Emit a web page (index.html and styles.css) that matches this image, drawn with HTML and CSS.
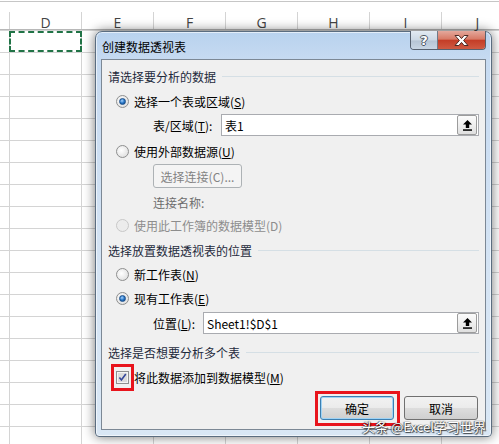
FILE: index.html
```html
<!DOCTYPE html>
<html>
<head>
    <meta charset="utf-8">
    <title>创建数据透视表</title>
    <link rel="stylesheet" href="styles.css">
</head>
<body>
    <div class="sheet">
        <div class="topbar"></div>
        <div class="colHeads">
            <div class="colHead first"></div>
            <div class="colHead">D</div>
            <div class="colHead">E</div>
            <div class="colHead">F</div>
            <div class="colHead">G</div>
            <div class="colHead">H</div>
            <div class="colHead">I</div>
            <div class="colHead">J</div>
        </div>
        <div class="grid">
            <div class="activeCell"></div>
        </div>
    </div>

    <div class="dialog">
        <div class="titleBar">
            <span class="title">创建数据透视表</span>
            <div class="capButtons">
                <div class="capBtn help">?</div>
                <div class="capBtn close">
                    <svg width="17" height="13" viewBox="0 0 17 13">
                        <path d="M2 1.5h3.9L8.5 4.6l2.6-3.1H15L10.6 6.5l4.4 5H11.1L8.5 8.4l-2.6 3.1H2l4.4-5z" fill="#fff" stroke="#4b2a24" stroke-width="1"/>
                    </svg>
                </div>
            </div>
        </div>

        <div class="client">
            <div class="group">
                <span>请选择要分析的数据</span>
                <div class="rule"></div>
            </div>
            <div class="opt gap5">
                <span class="radio on"></span>
                <span>选择一个表或区域(<u>S</u>)</span>
            </div>
            <div class="field gap3">
                <span class="fieldLabel wide">表/区域(<u>T</u>):</span>
                <div class="inputBox">
                    <span class="inputText">表1</span>
                    <div class="pickBtn">
                        <svg width="9" height="11" viewBox="0 0 9 11">
                            <path d="M4.5 0L9 4.6H6.2V8H2.8V4.6H0z" fill="#000"/>
                            <rect x="0" y="9.3" width="9" height="1.5" fill="#000"/>
                        </svg>
                    </div>
                </div>
            </div>
            <div class="opt gap5">
                <span class="radio"></span>
                <span>使用外部数据源(<u>U</u>)</span>
            </div>
            <div class="sub gap3">
                <div class="btn disabled">选择连接(C)...</div>
            </div>
            <div class="sub subText gap4">连接名称:</div>
            <div class="opt dim gap3">
                <span class="radio off"></span>
                <span>使用此工作簿的数据模型(D)</span>
            </div>

            <div class="group gap5">
                <span>选择放置数据透视表的位置</span>
                <div class="rule"></div>
            </div>
            <div class="opt gap4">
                <span class="radio"></span>
                <span>新工作表(<u>N</u>)</span>
            </div>
            <div class="opt gap4">
                <span class="radio on"></span>
                <span>现有工作表(<u>E</u>)</span>
            </div>
            <div class="field gap4">
                <span class="fieldLabel">位置(<u>L</u>):</span>
                <div class="inputBox">
                    <span class="inputText">Sheet1!$D$1</span>
                    <div class="pickBtn">
                        <svg width="9" height="11" viewBox="0 0 9 11">
                            <path d="M4.5 0L9 4.6H6.2V8H2.8V4.6H0z" fill="#000"/>
                            <rect x="0" y="9.3" width="9" height="1.5" fill="#000"/>
                        </svg>
                    </div>
                </div>
            </div>

            <div class="group gap8">
                <span>选择是否想要分析多个表</span>
                <div class="rule"></div>
            </div>
            <div class="opt gap5">
                <span class="checkbox marked">
                    <svg width="13" height="13" viewBox="0 0 13 13">
                        <rect x="0.5" y="0.5" width="12" height="12" fill="#f4f4f4" stroke="#8e8f8f"/>
                        <rect x="2" y="2" width="9" height="9" fill="#dcdcdc"/>
                        <path d="M3.4 6.6l2 2.4 4.4-6" fill="none" stroke="#34479a" stroke-width="1.6"/>
                    </svg>
                </span>
                <span>将此数据添加到数据模型(<u>M</u>)</span>
            </div>

            <div class="actions">
                <div class="btn default marked">确定</div>
                <div class="btn">取消</div>
            </div>
        </div>
    </div>

    <div class="watermark">头条 @Excel学习世界</div>
</body>
</html>
```

FILE: styles.css
```css
body {
    margin: 0;
    width: 499px;
    height: 444px;
    overflow: hidden;
    background: #fff;
    position: relative;
    font-family: "Noto Sans CJK SC", sans-serif;
}

/* spreadsheet behind the dialog */
.topbar {
    margin-top: 1px;
    height: 10px;
    border-top: 1px solid #c6c6c6;
}

.colHeads {
    display: flex;
    height: 17px;
    border-bottom: 1px solid #b8b8b8;
}

.colHead {
    flex: 0 0 72px;
    box-sizing: border-box;
    border-right: 1px solid #d4d4d4;
    text-align: center;
    font-family: "Open Sans", sans-serif;
    font-size: 14px;
    line-height: 21px;
    color: #444;
}

.colHead.first {
    flex-basis: 10px;
}

.grid {
    height: 420px;
    background-image:
        linear-gradient(to right, #d4d4d4 1px, transparent 1px),
        linear-gradient(to bottom, #d4d4d4 1px, transparent 1px);
    background-size: 72px 100%, 100% 22px;
    background-position: 9px 0, 0 0;
    padding-top: 1px;
}

.activeCell {
    margin-left: 9px;
    width: 73px;
    height: 21px;
    box-sizing: border-box;
    border: 2px dashed #217346;
}

/* dialog window */
.dialog {
    position: absolute;
    left: 95px;
    top: 31px;
    width: 397px;
    height: 406px;
    box-sizing: border-box;
    border: 1px solid #5b6d80;
    border-radius: 7px 7px 4px 4px;
    padding: 0 5px 6px 5px;
    display: flex;
    flex-direction: column;
    background: linear-gradient(to bottom, #b8d2ee 0, #c6daf1 27px, #d5e4f4 60%, #d9e7f5 100%);
    box-shadow: 0 0 12px rgba(0, 0, 0, 0.55), inset 0 0 0 1px rgba(255, 255, 255, 0.6);
}

.titleBar {
    height: 27px;
    display: flex;
    align-items: center;
}

.title {
    flex: 1;
    padding-left: 1px;
    font-size: 12px;
    color: #000;
    padding-top: 2px;
}

.capButtons {
    align-self: flex-start;
    margin-top: -1px;
    display: flex;
    height: 18px;
    border: 1px solid #56616f;
    border-top: none;
    border-radius: 0 0 4px 4px;
    overflow: hidden;
}

.capBtn {
    display: flex;
    align-items: center;
    justify-content: center;
}

.capBtn.help {
    width: 26px;
    border-right: 1px solid #6f7a88;
    background: linear-gradient(to bottom, #e2eaf2 0, #ccd8e4 50%, #b6c5d5 55%, #c8d6e4 100%);
    font-family: "DejaVu Sans", sans-serif;
    font-weight: bold;
    font-size: 13px;
    color: #fff;
    text-shadow: 1px 0 0 #4a5561, -1px 0 0 #4a5561, 0 1px 0 #4a5561, 0 -1px 0 #4a5561;
}

.capBtn.close {
    width: 47px;
    background: linear-gradient(to bottom, #e4a89c 0, #d77a66 45%, #c43d27 52%, #cf5a42 100%);
}

.client {
    flex: 1;
    background: #f0f0f0;
    border: 1px solid #7c8895;
    padding: 6px 6px 0 6px;
    font-size: 12px;
    color: #000;
}

.gap3 { margin-top: 3px; }
.gap4 { margin-top: 4px; }
.gap5 { margin-top: 5px; }
.gap8 { margin-top: 8px; }

.group {
    display: flex;
    align-items: center;
    height: 20px;
    color: #1e2a3c;
}

.rule {
    flex: 1;
    height: 1px;
    margin-left: 6px;
    background: #d5dfe5;
}

.opt {
    display: flex;
    align-items: center;
    height: 20px;
    padding-left: 8px;
    gap: 5px;
}

.opt.dim {
    color: #8d8d8d;
}

.radio {
    width: 11px;
    height: 11px;
    border-radius: 50%;
    border: 1px solid #8e8f8f;
    background: radial-gradient(circle at 40% 40%, #ffffff 0, #e4e4e4 70%, #d2d2d2 100%);
    display: flex;
    align-items: center;
    justify-content: center;
}

.radio.on::after {
    content: "";
    width: 5px;
    height: 5px;
    border-radius: 50%;
    background: radial-gradient(circle at 40% 35%, #a8d4ff 0, #2a78c8 50%, #0d3f80 100%);
    border: 1px solid #1b4f8a;
}

.radio.off {
    border-color: #c8c8c8;
    background: #ececec;
}

.checkbox {
    display: flex;
    width: 13px;
    height: 13px;
}

.field {
    display: flex;
    align-items: center;
    height: 22px;
    padding-left: 45px;
}

.fieldLabel {
    width: 50px;
}

.fieldLabel.wide {
    width: 68px;
}

.inputBox {
    flex: 1;
    height: 22px;
    box-sizing: border-box;
    border: 1px solid #a9abb0;
    background: #fff;
    display: flex;
    align-items: center;
    padding: 0 1px 0 3px;
}

.inputText {
    flex: 1;
}

.pickBtn {
    width: 20px;
    height: 20px;
    box-sizing: border-box;
    border: 1px solid #9c9c9c;
    border-radius: 2px;
    background: linear-gradient(to bottom, #fbfbfb 0, #efefef 50%, #dfdfdf 100%);
    display: flex;
    align-items: center;
    justify-content: center;
}

.sub {
    padding-left: 45px;
    display: flex;
}

.subText {
    height: 20px;
    align-items: center;
    color: #6d6d6d;
}

.btn {
    width: 74px;
    height: 24px;
    box-sizing: border-box;
    border: 1px solid #707070;
    border-radius: 3px;
    background: linear-gradient(to bottom, #f2f2f2 0, #ebebeb 50%, #dddddd 51%, #cfcfcf 100%);
    display: flex;
    align-items: center;
    justify-content: center;
}

.btn.disabled {
    width: 89px;
    border-color: #adb2b5;
    background: #f4f4f4;
    color: #838383;
}

.btn.default {
    border-color: #3c7fb1;
    box-shadow: inset 0 0 0 1px #9fd3f5;
}

.actions {
    margin-top: 9px;
    display: flex;
    justify-content: flex-end;
    gap: 10px;
    padding-right: 1px;
}

/* red annotation frames */
.marked {
    position: relative;
}

.marked::after {
    content: "";
    position: absolute;
    border: 3px solid #e8141c;
}

.checkbox.marked::after {
    top: -7px;
    bottom: -7px;
    left: -5px;
    right: -5px;
}

.btn.marked::after {
    top: -6px;
    bottom: -7px;
    left: -6px;
    right: -7px;
}

.watermark {
    position: absolute;
    left: 362px;
    top: 417px;
    font-size: 13px;
    color: #fff;
    text-shadow: 0 0 1px #222, 1px 1px 1px rgba(0, 0, 0, 0.7), -1px 0 1px rgba(0, 0, 0, 0.5);
    white-space: nowrap;
}
```
